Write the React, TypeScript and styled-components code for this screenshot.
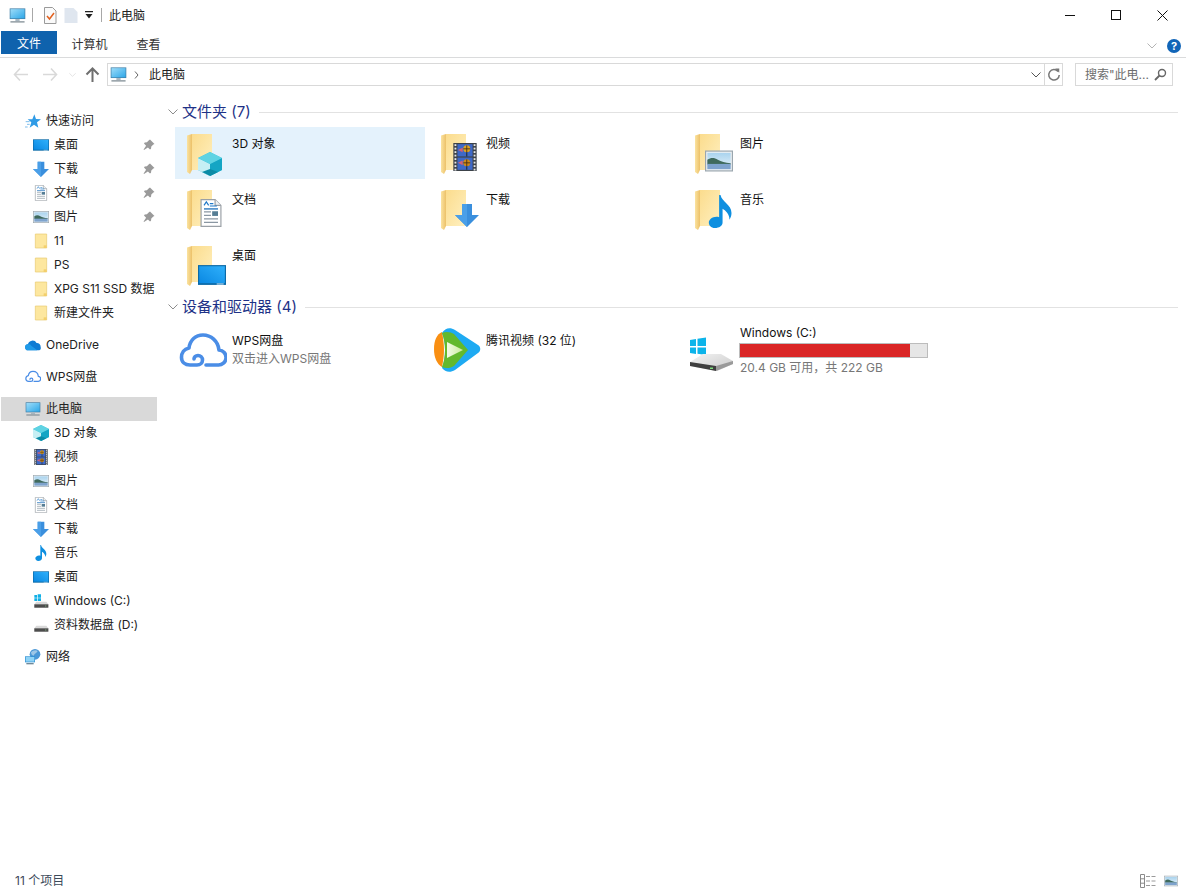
import * as React from "react"
import styled, {createGlobalStyle} from "styled-components"

const GlobalStyle = createGlobalStyle`
  html, body {
    margin: 0;
    padding: 0;
    background: #fff;
    overflow: hidden;
  }
  * {
    box-sizing: border-box;
  }
  body {
    font-family: Inter, "Noto Sans CJK SC", sans-serif;
    font-size: 12px;
    color: #1a1a1a;
  }
`

const Window = styled.div`
  width: 1186px;
  height: 893px;
  display: flex;
  flex-direction: column;
  overflow: hidden;
  background: #fff;
`

const TitleBar = styled.div`
  height: 30px;
  display: flex;
  align-items: center;
  padding-left: 9px;
  flex: none;
`

const TitleText = styled.span`
  margin-left: 7px;
  padding-top: 2px;
  line-height: 16px;
  color: #222;
`

const QuickSep = styled.span<{$left: number; $right: number}>`
  width: 1px;
  height: 14px;
  background: #a8a8a8;
  margin: 0 ${p => p.$right}px 0 ${p => p.$left}px;
`

const QuickIcon = styled.svg<{$gap: number}>`
  margin-left: ${p => p.$gap}px;
`

const WindowControls = styled.div`
  margin-left: auto;
  margin-right: 1px;
  display: flex;
`

const WindowButton = styled.div`
  width: 46px;
  height: 30px;
  display: flex;
  align-items: center;
  justify-content: center;
`

const RibbonTabs = styled.div`
  height: 28px;
  flex: none;
  display: flex;
  align-items: flex-start;
  padding-top: 1px;
  padding-left: 1px;
  padding-right: 5px;
  border-bottom: 1px solid #dadbdc;
`

const RibbonTab = styled.div<{$active?: boolean}>`
  height: 23px;
  line-height: ${p => p.$active ? "26px" : "28px"};
  padding: 0 ${p => p.$active ? "16px" : "14.5px"};
  width: ${p => p.$active ? "56px" : "auto"};
  background: ${p => p.$active ? "#0f62ad" : "transparent"};
  color: ${p => p.$active ? "#fff" : "#333"};
`

const RibbonRight = styled.div`
  margin-left: auto;
  height: 27px;
  display: flex;
  align-items: center;
  gap: 10px;
  padding-top: 2px;
`

const HelpBadge = styled.div`
  width: 14px;
  height: 14px;
  border-radius: 50%;
  background: #1165b8;
  color: #fff;
  font-size: 11px;
  font-weight: 700;
  line-height: 14px;
  text-align: center;
`

const AddressRow = styled.div`
  height: 39px;
  flex: none;
  display: flex;
  align-items: flex-start;
  padding: 5px 13px 0 6px;
`

const NavButton = styled.div<{$width: number}>`
  width: ${p => p.$width}px;
  height: 23px;
  display: flex;
  align-items: center;
  justify-content: center;
  flex: none;
`

const AddressBox = styled.div`
  flex: 1;
  height: 23px;
  margin-left: 1px;
  border: 1px solid #d9d9d9;
  display: flex;
  align-items: center;
  padding-left: 2px;
  color: #222;
`

const CrumbArrow = styled.svg`
  margin-left: 7px;
`

const Crumb = styled.span`
  line-height: 16px;
  margin-left: 10px;
`

const AddressEnd = styled.div`
  margin-left: auto;
  display: flex;
  align-items: center;
  height: 100%;
`

const RefreshCell = styled.div`
  width: 18px;
  height: 100%;
  margin-left: 3px;
  border-left: 1px solid #d9d9d9;
  display: flex;
  align-items: center;
  justify-content: center;
`

const SearchBox = styled.div`
  width: 98px;
  height: 23px;
  margin-left: 12px;
  flex: none;
  border: 1px solid #d9d9d9;
  display: flex;
  align-items: center;
  justify-content: space-between;
  padding: 0 5px 0 9px;
  color: #6d6d6d;
  line-height: 16px;
`

const Body = styled.div`
  flex: 1;
  display: flex;
  min-height: 0;
`

const NavPane = styled.nav`
  width: 159px;
  flex: none;
  padding-top: 12px;
  padding-left: 1px;
  display: flex;
  flex-direction: column;
  gap: 8px;
  overflow: hidden;
`

const NavGroup = styled.div`
  display: flex;
  flex-direction: column;
`

const NavRow = styled.div<{$child?: boolean; $selected?: boolean}>`
  height: 24px;
  width: 156px;
  display: flex;
  align-items: center;
  gap: 5px;
  padding-left: ${p => p.$child ? "32px" : "24px"};
  padding-right: 2px;
  background: ${p => p.$selected ? "#d9d9d9" : "transparent"};
  color: #222;
  line-height: 16px;
  white-space: nowrap;
`

const NavLabel = styled.span`
  flex: 1;
`

const Main = styled.main`
  flex: 1;
  padding: 0 8px 0 8px;
  min-width: 0;
`

const GroupHeader = styled.div`
  height: 30px;
  display: flex;
  align-items: center;
  gap: 4px;
  padding-left: 1px;
`

const GroupTitle = styled.span`
  font-size: 15px;
  line-height: 20px;
  color: #1e3287;
`

const GroupRule = styled.span`
  flex: 1;
  height: 1px;
  background: #e2e2e2;
  margin-left: 4px;
`

const TileGrid = styled.div`
  display: grid;
  grid-template-columns: repeat(3, 250px);
  gap: 4px;
  padding-left: 8px;
  margin-bottom: 1px;
  & + ${GroupHeader} {
    margin-bottom: 2px;
  }
`

const Tile = styled.div<{$active?: boolean}>`
  height: 52px;
  display: grid;
  grid-template-columns: 57px 1fr;
  background: ${p => p.$active ? "#e4f2fc" : "transparent"};
`

const TileIcon = styled.div<{$inset: number}>`
  padding: 4px 0 0 ${p => p.$inset}px;
  line-height: 0;
`

const TileText = styled.div`
  padding-top: 9px;
  line-height: 16px;
  color: #111;
`

const TileSub = styled.div`
  margin-top: 2px;
  line-height: 16px;
  color: #777;
`

const DriveInfo = styled.div`
  padding-top: 1px;
`

const DriveName = styled.div`
  line-height: 16px;
  color: #111;
`

const UsageTrack = styled.div`
  width: 189px;
  height: 15px;
  margin-top: 2px;
  margin-left: -1px;
  border: 1px solid #bcbcbc;
  background: #e6e6e6;
`

const UsageFill = styled.div`
  height: 100%;
  background: #da2626;
`

const DriveSub = styled.div`
  margin-top: 2px;
  line-height: 16px;
  color: #777;
`

const StatusBar = styled.div`
  height: 26px;
  flex: none;
  display: flex;
  align-items: center;
  padding: 2px 8px 0 15px;
  line-height: 16px;
  color: #3c4a5a;
`

const ViewIcons = styled.div`
  margin-left: auto;
  display: flex;
  gap: 8px;
  align-items: center;
`

const HiddenDefs = styled.svg`
  position: absolute;
  width: 0;
  height: 0;
`

type GlyphProps = {size?: number; x?: number; y?: number}

const Glyph: React.FC<GlyphProps & {children: React.ReactNode; box?: string}> = ({size = 16, x, y, box = "0 0 24 24", children}) => (
  <svg width={size} height={size} x={x} y={y} viewBox={box}>{children}</svg>
)

const SharedDefs = () => (
  <HiddenDefs aria-hidden="true">
    <defs>
      <linearGradient id="folderFront" x1="0" y1="0" x2="1" y2="1">
        <stop offset="0" stopColor="#fbdc8d" />
        <stop offset="1" stopColor="#fff0c0" />
      </linearGradient>
      <linearGradient id="folderSide" x1="0" y1="0" x2="1" y2="0">
        <stop offset="0" stopColor="#fbe3a0" />
        <stop offset="1" stopColor="#ecc169" />
      </linearGradient>
      <linearGradient id="screen" x1="0" y1="1" x2="1" y2="0">
        <stop offset="0" stopColor="#0a88e2" />
        <stop offset="1" stopColor="#2fb0fb" />
      </linearGradient>
      <linearGradient id="sky" x1="0" y1="0" x2="0" y2="1">
        <stop offset="0" stopColor="#a9d3ee" />
        <stop offset="1" stopColor="#e8f4fa" />
      </linearGradient>
      <linearGradient id="monitor" x1="0" y1="0" x2="1" y2="1">
        <stop offset="0" stopColor="#9ddcf9" />
        <stop offset="1" stopColor="#2da7e8" />
      </linearGradient>
      <linearGradient id="driveTop" x1="0" y1="0" x2="1" y2="1">
        <stop offset="0" stopColor="#f4f4f4" />
        <stop offset="1" stopColor="#c9c9c9" />
      </linearGradient>
      <linearGradient id="playLight" x1="0" y1="0" x2="1" y2="0">
        <stop offset="0" stopColor="#f4fbe6" />
        <stop offset="1" stopColor="#c9eb9a" />
      </linearGradient>
    </defs>
  </HiddenDefs>
)

const Monitor: React.FC<GlyphProps> = p => (
  <Glyph {...p}>
    <rect x="1" y="2" width="22" height="15" fill="#3f7fa8" />
    <rect x="2" y="3" width="20" height="13" fill="url(#monitor)" />
    <rect x="9" y="17" width="6" height="3" fill="#a7b6c0" />
    <rect x="2" y="20" width="20" height="2" fill="#8b979e" />
  </Glyph>
)

const Desktop: React.FC<GlyphProps> = p => (
  <Glyph {...p}>
    <rect x="0" y="3.5" width="24" height="17" fill="#0b6aa8" />
    <rect x="1" y="4.5" width="22" height="14.5" fill="url(#screen)" />
    <rect x="16" y="19.3" width="6" height="0.8" fill="#dff2ff" />
  </Glyph>
)

const ArrowDown: React.FC<GlyphProps> = p => (
  <Glyph {...p}>
    <path d="M7 1h10v11h7L12 24 0 12h7z" fill="#3a8fdd" />
    <path d="M12 24 0 12h7V1h5z" fill="#4a9fe8" />
  </Glyph>
)

const DocSheet: React.FC<GlyphProps> = p => (
  <Glyph {...p}>
    <path d="M3.5.5h12l5 5v18h-17z" fill="#fff" stroke="#9aa0a6" />
    <path d="M15.5.5v5h5" fill="#eef1f3" stroke="#9aa0a6" />
    <path d="M6 5.500 8 2.500 10 5.500M11 4h3M11 6h6" fill="none" stroke="#1f78c8" />
    <path d="M6 8.500h12" stroke="#2c79bf" strokeWidth="1.200" />
    <path d="M6 11h6M6 14h6M6 17h12M6 20h12" stroke="#8a97a3" />
    <rect x="13" y="10.500" width="5" height="4" fill="#557d94" />
  </Glyph>
)

const Picture: React.FC<GlyphProps> = p => (
  <Glyph {...p}>
    <rect x=".5" y="3.500" width="23" height="17" fill="#eef1f3" stroke="#9aa6ae" />
    <rect x="2" y="5" width="20" height="14" fill="url(#sky)" />
    <path d="M2 11c3-2 6-2 9 0 3 1.500 6 2.500 11 3v1H2z" fill="#3f6a5c" />
    <rect x="2" y="14.500" width="20" height="4.500" fill="#7ea3cd" />
  </Glyph>
)

const SmallFolder: React.FC<GlyphProps> = p => (
  <Glyph {...p}>
    <path d="M3.500 1.500h17v21h-17z" fill="#fde79f" stroke="#e8c86e" strokeWidth="1" />
    <path d="M16 22.500v-4h4.500v4z" fill="#f3cf6c" />
  </Glyph>
)

const Cube: React.FC<GlyphProps> = p => (
  <Glyph {...p}>
    <path d="M12 0 24 6v12l-12 6L0 18V6z" fill="#45c3d8" />
    <path d="M0 6l12 6v12L0 18z" fill="#c6eff4" />
    <path d="M12 12l12-6v12l-12 6z" fill="#14a5c4" />
    <path d="M12 0l12 6-12 6L0 6z" fill="#5fd3e3" />
    <path d="M4 20l8-3 8 3-8 4z" fill="#0b8ba6" />
  </Glyph>
)

const Film: React.FC<GlyphProps> = p => (
  <Glyph {...p}>
    <rect x="2" y="0" width="20" height="24" fill="#3c4249" />
    <rect x="5.500" y="1" width="13" height="10.500" fill="#3e69c8" />
    <rect x="5.500" y="12.500" width="13" height="10.500" fill="#3e69c8" />
    <circle cx="13.500" cy="5" r="3" fill="#e0a21f" />
    <circle cx="13.500" cy="17" r="3" fill="#d18a18" />
    <path d="M6 6l4-2v4zM6 17l4-2v4z" fill="#d86070" />
    <path d="M13.500 2v6M13.500 14v6M10.500 5h6M10.500 17h6" stroke="#3a2a18" strokeWidth=".7" />
    <path d="M13.500 8v3.500M13.500 20v3" stroke="#23313d" />
    {[1, 4, 7, 10, 13, 16, 19, 22].map(cy => (
      <g key={cy}>
        <rect x="3" y={cy} width="1.600" height="1.600" fill="#e8e8e8" />
        <rect x="19.400" y={cy} width="1.600" height="1.600" fill="#e8e8e8" />
      </g>
    ))}
  </Glyph>
)

const Note: React.FC<GlyphProps> = p => (
  <Glyph {...p}>
    <path d="M12 0c1 5 8 7 8 13 0 2-.7 3.500-1.500 5 .2-4-3-7-5-8v10c0 2.500-2.500 4-5.500 4S3.500 22 3.500 20 6 15.800 9 15.800c.8 0 1.500.1 2 .4V0z" fill="#0e8fe0" />
  </Glyph>
)

const Star: React.FC<GlyphProps> = p => (
  <Glyph {...p}>
    <path d="M14 2l2.500 7 7.500.5-6 4.500 2 8-6.500-4.500L7 22l2.500-8L4 9.500h7z" fill="#2f9be6" />
    <path d="M1 13h6M3 17h4M0 21h4" stroke="#7dbdec" strokeWidth="1.500" />
  </Glyph>
)

const Pin = () => (
  <svg width="12" height="12" viewBox="0 0 12 12">
    <path d="M7 0.500l4.500 4.500-1.200.6-2 2-.3 2.200-1 .7-2.100-2.100L1 11l-.4-.4 2.500-3.900L1 4.600l.7-1 2.200-.3 2-2z" fill="#9a9a9a" />
  </svg>
)

const DriveSmall: React.FC<GlyphProps & {windows?: boolean}> = ({windows, ...p}) => (
  <Glyph {...p}>
    <path d="M5 13l-3 4v5h21v-5l-3-4z" fill="#d9d9d9" />
    <rect x="2" y="17" width="21" height="5" fill="#4d4d4d" />
    <rect x="18" y="19" width="2" height="1" fill="#8bd08b" />
    {windows && <path d="M2 3h4v4H2zM7 2h5v5H7zM2 8h4v4H2zM7 8h5v4H7z" fill="#10b0e6" />}
  </Glyph>
)

const OneDrive: React.FC<GlyphProps> = p => (
  <Glyph {...p}>
    <path d="M5 20a4.500 4.500 0 0 1-.6-9 7 7 0 0 1 13-2 5.500 5.500 0 0 1 6 6 4 4 0 0 1-1.900 5z" fill="#0f7cd4" />
    <path d="M5 20a4.500 4.500 0 0 1-.6-9c2-.3 4 .5 5 2l9 7z" fill="#1f9ae8" />
  </Glyph>
)

const WpsCloud: React.FC<GlyphProps> = ({size = 16, x, y}) => (
  <Glyph size={size} x={x} y={y} box="0 0 48 48">
    <path
      d="M27 37h12a7.500 7.500 0 0 0 1-15C39 13 32 7 24 7 16.500 7 11 12 10 20 5 21 2.500 25 2.500 29.500 2.500 34 6 37 11 37h7c3.500 0 5.500-2.500 5.500-5s-2-4.500-4.500-4.500-4 1.800-4 3.500"
      fill="none"
      stroke="#4a8de6"
      strokeWidth="3.600"
      strokeLinecap="round"
      strokeLinejoin="round"
    />
  </Glyph>
)

const Network: React.FC<GlyphProps> = p => (
  <Glyph {...p}>
    <circle cx="15" cy="8" r="8" fill="#4a97d6" />
    <path d="M9 5c3-3 7-4 10-2-1 3-5 4-6 7-2 0-4-2-4-5z" fill="#9cc6e6" />
    <rect x="0" y="11" width="15" height="9" fill="#2d8fd2" />
    <rect x="1" y="12" width="13" height="7" fill="#8fd3f6" />
    <rect x="2" y="21" width="11" height="2" fill="#6f8999" />
  </Glyph>
)

const BigFolder: React.FC<{children: React.ReactNode}> = ({children}) => (
  <svg width="46" height="48" viewBox="0 0 46 48" overflow="visible">
    <path d="M7 3h20v36H7z" fill="url(#folderFront)" />
    <path d="M2 4.500 7 3v36l-2 4-3-2z" fill="url(#folderSide)" />
    {children}
  </svg>
)

const TencentVideo = () => (
  <svg width="48" height="44" viewBox="0 0 48 44">
    <path d="M9 4C4 6 1 12 1 21s3 15 8 18c1-5 2-11 2-17S10 9 9 4z" fill="#f98f12" />
    <path d="M9 5c3-5 8-6 13-3l23 15c3 2 3 6 0 8L22 42c-5 3-10 2-13-2 2-5 3-11 3-18S11 10 9 5z" fill="#1eaaf2" />
    <path d="M9 5c4-2 9-1 12 1l14 16-14 16c-3 2-8 3-12 1 2-5 3-11 3-17S11 10 9 5z" fill="#63b92d" />
    <path d="M14 14l16 8-16 8z" fill="url(#playLight)" />
  </svg>
)

const WindowsDrive = () => (
  <svg width="48" height="48" viewBox="0 0 48 48">
    <path d="M3 12l6-1v7H3zM10.500 10.800 19 9.500V18h-8.500zM3 19.500h6v6.500l-6-1zM10.500 19.500H19v7.500l-8.500-1.200z" fill="#0cb4ea" />
    <path d="M3 34l13-8h18l12 7v3L30 43 3 38z" fill="url(#driveTop)" />
    <path d="M3 34l26 4v5L3 38z" fill="#3f3f3f" />
    <path d="M29 38l17-5v3L29 43z" fill="#9a9a9a" />
    <rect x="23" y="39.500" width="3" height="1.500" fill="#7ee07e" />
  </svg>
)

const Chevron: React.FC<{color?: string; width?: number}> = ({color = "#8c8c8c", width = 10}) => (
  <svg width={width} height="6" viewBox="0 0 10 6">
    <path d="M.5.500 5 5 9.500.500" fill="none" stroke={color} strokeWidth="1" />
  </svg>
)

const NavArrow: React.FC<{dir: "left" | "right" | "up"; color: string}> = ({dir, color}) => {
  const d = {
    left: "M7 1.500 1.500 7.500 7 13.500M1.500 7.500H15",
    right: "M9 1.500 14.500 7.500 9 13.500M14.500 7.500H1",
    up: "M1.500 7.500 7.500 1.500l6 6M7.500 1.500V15",
  }[dir]
  return (
    <svg width="16" height="16" viewBox="0 0 16 16">
      <path d={d} fill="none" stroke={color} strokeWidth={dir === "up" ? 2 : 1.600} />
    </svg>
  )
}

type NavEntry = {label: string; icon: React.ReactNode; pinned?: boolean}

const quickAccess: NavEntry[] = [
  {label: "桌面", icon: <Desktop />, pinned: true},
  {label: "下载", icon: <ArrowDown />, pinned: true},
  {label: "文档", icon: <DocSheet />, pinned: true},
  {label: "图片", icon: <Picture />, pinned: true},
  {label: "11", icon: <SmallFolder />},
  {label: "PS", icon: <SmallFolder />},
  {label: "XPG S11 SSD 数据", icon: <SmallFolder />},
  {label: "新建文件夹", icon: <SmallFolder />},
]

const thisPc: NavEntry[] = [
  {label: "3D 对象", icon: <Cube />},
  {label: "视频", icon: <Film />},
  {label: "图片", icon: <Picture />},
  {label: "文档", icon: <DocSheet />},
  {label: "下载", icon: <ArrowDown />},
  {label: "音乐", icon: <Note />},
  {label: "桌面", icon: <Desktop />},
  {label: "Windows (C:)", icon: <DriveSmall windows />},
  {label: "资料数据盘 (D:)", icon: <DriveSmall />},
]

const folders: {label: string; overlay: React.ReactNode; active?: boolean}[] = [
  {label: "3D 对象", overlay: <Cube size={24} x={13} y={21} />, active: true},
  {label: "视频", overlay: <Film size={28} x={12} y={12} />},
  {label: "图片", overlay: <Picture size={28} x={12} y={16} />},
  {label: "文档", overlay: <DocSheet size={28} x={12} y={12} />},
  {label: "下载", overlay: <ArrowDown size={24} x={16} y={16} />},
  {label: "音乐", overlay: <Note size={33} x={11} y={8} />},
  {label: "桌面", overlay: <Desktop size={28} x={13} y={18} />},
]

const NavList: React.FC<{items: NavEntry[]}> = ({items}) => (
  <>
    {items.map(item => (
      <NavRow $child key={item.label}>
        {item.icon}
        <NavLabel>{item.label}</NavLabel>
        {item.pinned && <Pin />}
      </NavRow>
    ))}
  </>
)

const driveUsedPercent = ((222 - 20.4) / 222) * 100

export default function App() {
  return (
    <Window>
      <GlobalStyle />
      <SharedDefs />
      <TitleBar>
        <Monitor size={17} />
        <QuickSep $left={6} $right={0} />
        <QuickIcon $gap={10} width="14" height="17" viewBox="0 0 14 17">
          <path d="M1.500.500h8l3.500 3.500v12.500H1.500z" fill="#fafafa" stroke="#9a9a9a" />
          <path d="M4 9l2.500 3L11 6" fill="none" stroke="#e2601e" strokeWidth="1.500" />
        </QuickIcon>
        <QuickIcon $gap={7} width="14" height="17" viewBox="0 0 14 17">
          <path d="M.5 1h9l4 4v11H.5z" fill="#dfe6ef" />
        </QuickIcon>
        <QuickIcon $gap={7} width="8" height="8" viewBox="0 0 8 8">
          <path d="M0 0h8v1.200H0zM.5 3h7L4 7.500z" fill="#222" />
        </QuickIcon>
        <QuickSep $left={8} $right={0} />
        <TitleText>此电脑</TitleText>
        <WindowControls>
          <WindowButton>
            <svg width="10" height="10" viewBox="0 0 10 10"><path d="M0 5.500h10" stroke="#111" /></svg>
          </WindowButton>
          <WindowButton>
            <svg width="10" height="10" viewBox="0 0 10 10"><rect x=".5" y=".5" width="9" height="9" fill="none" stroke="#111" /></svg>
          </WindowButton>
          <WindowButton>
            <svg width="11" height="11" viewBox="0 0 11 11"><path d="M.5.500l10 10M10.500.500l-10 10" stroke="#111" /></svg>
          </WindowButton>
        </WindowControls>
      </TitleBar>

      <RibbonTabs>
        <RibbonTab $active>文件</RibbonTab>
        <RibbonTab>计算机</RibbonTab>
        <RibbonTab>查看</RibbonTab>
        <RibbonRight>
          <Chevron color="#b4b4b4" />
          <HelpBadge>?</HelpBadge>
        </RibbonRight>
      </RibbonTabs>

      <AddressRow>
        <NavButton $width={29}><NavArrow dir="left" color="#d9d9d9" /></NavButton>
        <NavButton $width={29}><NavArrow dir="right" color="#d9d9d9" /></NavButton>
        <NavButton $width={16}><Chevron color="#d9d9d9" width={7} /></NavButton>
        <NavButton $width={26}><NavArrow dir="up" color="#6f6f6f" /></NavButton>
        <AddressBox>
          <Monitor size={17} />
          <CrumbArrow width="5" height="8" viewBox="0 0 5 8">
            <path d="M1 .5 4 4 1 7.500" fill="none" stroke="#666" />
          </CrumbArrow>
          <Crumb>此电脑</Crumb>
          <AddressEnd>
            <Chevron color="#555" />
            <RefreshCell>
              <svg width="14" height="14" viewBox="0 0 12 12">
                <path d="M9.500 3a4.500 4.500 0 1 0 1 3" fill="none" stroke="#777" strokeWidth="1.300" />
                <path d="M7 .5h3.500V4z" fill="#777" />
              </svg>
            </RefreshCell>
          </AddressEnd>
        </AddressBox>
        <SearchBox>
          <span>搜索"此电...</span>
          <svg width="13" height="13" viewBox="0 0 13 13">
            <circle cx="8" cy="5" r="3.500" fill="none" stroke="#666" strokeWidth="1.400" />
            <path d="M5.500 7.500 1 12" stroke="#666" strokeWidth="1.800" />
          </svg>
        </SearchBox>
      </AddressRow>

      <Body>
        <NavPane>
          <NavGroup>
            <NavRow><Star /><NavLabel>快速访问</NavLabel></NavRow>
            <NavList items={quickAccess} />
          </NavGroup>
          <NavGroup>
            <NavRow><OneDrive /><NavLabel>OneDrive</NavLabel></NavRow>
          </NavGroup>
          <NavGroup>
            <NavRow><WpsCloud /><NavLabel>WPS网盘</NavLabel></NavRow>
          </NavGroup>
          <NavGroup>
            <NavRow $selected><Monitor /><NavLabel>此电脑</NavLabel></NavRow>
            <NavList items={thisPc} />
          </NavGroup>
          <NavGroup>
            <NavRow><Network /><NavLabel>网络</NavLabel></NavRow>
          </NavGroup>
        </NavPane>

        <Main>
          <GroupHeader>
            <Chevron />
            <GroupTitle>文件夹 (7)</GroupTitle>
            <GroupRule />
          </GroupHeader>
          <TileGrid>
            {folders.map(f => (
              <Tile $active={f.active} key={f.label}>
                <TileIcon $inset={10}>
                  <BigFolder>{f.overlay}</BigFolder>
                </TileIcon>
                <TileText>{f.label}</TileText>
              </Tile>
            ))}
          </TileGrid>

          <GroupHeader>
            <Chevron />
            <GroupTitle>设备和驱动器 (4)</GroupTitle>
            <GroupRule />
          </GroupHeader>
          <TileGrid>
            <Tile>
              <TileIcon $inset={4}><WpsCloud size={48} /></TileIcon>
              <TileText>
                WPS网盘
                <TileSub>双击进入WPS网盘</TileSub>
              </TileText>
            </Tile>
            <Tile>
              <TileIcon $inset={4}><TencentVideo /></TileIcon>
              <TileText>腾讯视频 (32 位)</TileText>
            </Tile>
            <Tile>
              <TileIcon $inset={4}><WindowsDrive /></TileIcon>
              <DriveInfo>
                <DriveName>Windows (C:)</DriveName>
                <UsageTrack>
                  <UsageFill style={{width: `${driveUsedPercent}%`}} />
                </UsageTrack>
                <DriveSub>20.4 GB 可用，共 222 GB</DriveSub>
              </DriveInfo>
            </Tile>
          </TileGrid>
        </Main>
      </Body>

      <StatusBar>
        11 个项目
        <ViewIcons>
          <svg width="16" height="14" viewBox="0 0 16 14">
            <path d="M.5.500h4v13h-4zM.5 4.800h4M.5 9.200h4" fill="none" stroke="#8a8a8a" />
            <path d="M6 2.500h4M6 7h4M6 11.500h4M11.500 2.500h4M11.500 7h4M11.500 11.500h4" stroke="#9a9a9a" />
          </svg>
          <Picture size={14} />
        </ViewIcons>
      </StatusBar>
    </Window>
  )
}
